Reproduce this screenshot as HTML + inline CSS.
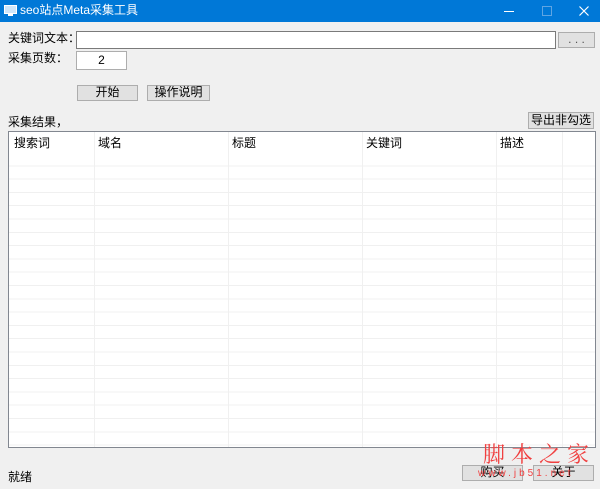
<!DOCTYPE html><html><head><style>
body{margin:0;width:600px;height:489px;background:#f0f0f0;font-family:"Liberation Sans","Noto Sans CJK SC",sans-serif;font-size:12px;line-height:14px;color:#000;position:relative;overflow:hidden}
.a{position:absolute}
.tb{left:0;top:0;width:600px;height:22px;background:#0078d7;color:#fff}
.btn{position:absolute;background:#e1e1e1;border:1px solid #adadad;box-sizing:border-box;text-align:center;font-size:12px}
.in{position:absolute;background:#fff;border:1px solid #7a7a7a;box-sizing:border-box}
</style></head><body>
<div class="a tb">
<svg class="a" style="left:4px;top:5px" width="13" height="12"><rect x="0.5" y="0.5" width="12" height="8" fill="#cfe6fa" stroke="#fff"/><rect x="4" y="9" width="5" height="2" fill="#fff"/></svg>
<div class="a" style="left:20px;top:3px;font-size:12px">seo站点Meta采集工具</div>
<div class="a" style="left:504px;top:11px;width:10px;height:1px;background:#fff"></div>
<div class="a" style="left:542px;top:6px;width:8px;height:8px;border:1px solid #5fa5e3"></div>
<svg class="a" style="left:579px;top:6px" width="10" height="10"><path d="M0.5 0.5L9.5 9.5M9.5 0.5L0.5 9.5" stroke="#fff" stroke-width="1.2"/></svg>
</div>
<div class="a" style="left:8px;top:31px">关键词文本：</div>
<div class="in" style="left:76px;top:31px;width:480px;height:18px"></div>
<div class="btn" style="left:558px;top:32px;width:37px;height:16px;line-height:12px;color:#555">. . .</div>
<div class="a" style="left:8px;top:51px">采集页数：</div>
<div class="in" style="left:76px;top:51px;width:51px;height:19px;text-align:center;line-height:16px;border-color:#adadad">2</div>
<div class="btn" style="left:77px;top:85px;width:61px;height:16px;line-height:13px">开始</div>
<div class="btn" style="left:147px;top:85px;width:63px;height:16px;line-height:13px">操作说明</div>
<div class="a" style="left:8px;top:115px">采集结果，</div>
<div class="btn" style="left:528px;top:112px;width:66px;height:17px;line-height:14px">导出非勾选</div>
<div class="a" style="left:8px;top:131px;width:588px;height:317px;background:#fff;border:1px solid #828790;box-sizing:border-box;
background-image:repeating-linear-gradient(to bottom,transparent 0,transparent 12.3px,#f0f0f0 12.3px,#f0f0f0 13.3px);background-position:0 21px;background-repeat:repeat-y;background-size:100% 100%;background-origin:content-box">
<div class="a" style="left:0;top:0;width:586px;height:21px;background:#fff"></div>
<div class="a" style="left:85px;top:0;width:1px;height:315px;background:#f0f0f0"></div>
<div class="a" style="left:219px;top:0;width:1px;height:315px;background:#f0f0f0"></div>
<div class="a" style="left:353px;top:0;width:1px;height:315px;background:#f0f0f0"></div>
<div class="a" style="left:487px;top:0;width:1px;height:315px;background:#f0f0f0"></div>
<div class="a" style="left:553px;top:0;width:1px;height:315px;background:#f0f0f0"></div>
<div class="a" style="left:5px;top:4px">搜索词</div>
<div class="a" style="left:89px;top:4px">域名</div>
<div class="a" style="left:223px;top:4px">标题</div>
<div class="a" style="left:357px;top:4px">关键词</div>
<div class="a" style="left:491px;top:4px">描述</div>
</div>
<div class="a" style="left:8px;top:470px">就绪</div>
<div class="btn" style="left:462px;top:465px;width:61px;height:16px;line-height:13px">购买</div>
<div class="btn" style="left:533px;top:465px;width:61px;height:16px;line-height:13px">关于</div>
<div class="a" style="left:483px;top:442px;color:#f04040;font-size:22px;line-height:24px;font-family:'Noto Serif CJK SC',serif;letter-spacing:6px">脚本之家</div>
<div class="a" style="left:478px;top:467px;color:#f04040;font-size:10px;letter-spacing:3px">www.jb51.net</div>
</body></html>
